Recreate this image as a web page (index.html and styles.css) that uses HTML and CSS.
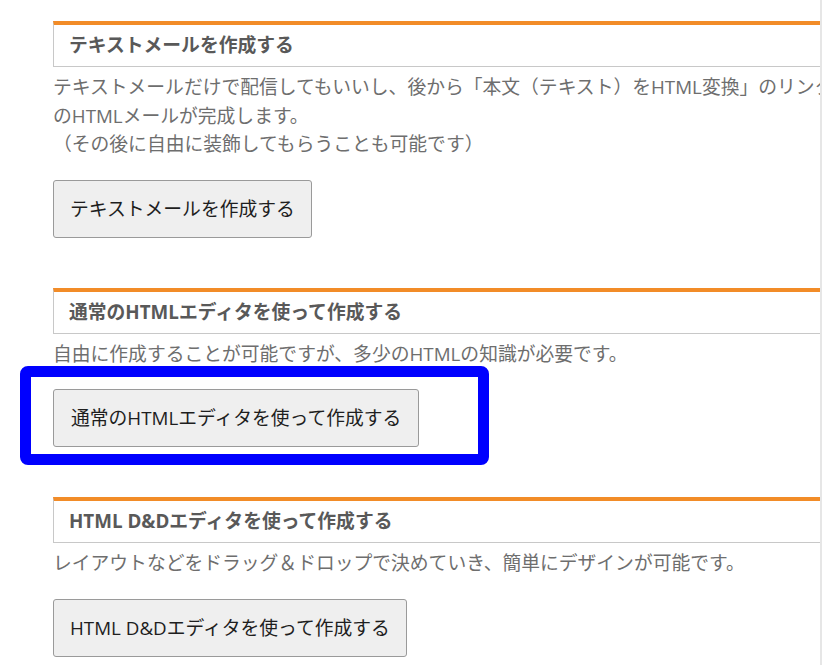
FILE: index.html
```html
<!DOCTYPE html>
<html lang="ja">
<head>
<meta charset="utf-8">
<link rel="stylesheet" href="styles.css">
</head>
<body>
<div class="page">
  <section class="block">
    <h3 class="block-title">テキストメールを作成する</h3>
    <p class="block-text">テキストメールだけで配信してもいいし、後から「本文（テキスト）をHTML変換」のリンクから変換すればそのままのHTMLメールが完成します。<br>（その後に自由に装飾してもらうことも可能です）</p>
    <div class="btn-row"><button class="btn">テキストメールを作成する</button></div>
  </section>
  <section class="block">
    <h3 class="block-title">通常のHTMLエディタを使って作成する</h3>
    <p class="block-text">自由に作成することが可能ですが、多少のHTMLの知識が必要です。</p>
    <div class="btn-row"><span class="btn-wrap"><button class="btn btn-wide">通常のHTMLエディタを使って作成する</button><span class="highlight"></span></span></div>
  </section>
  <section class="block">
    <h3 class="block-title">HTML D&amp;Dエディタを使って作成する</h3>
    <p class="block-text">レイアウトなどをドラッグ＆ドロップで決めていき、簡単にデザインが可能です。</p>
    <div class="btn-row"><button class="btn">HTML D&amp;Dエディタを使って作成する</button></div>
  </section>
</div>
<div class="edge-line"></div>
</body>
</html>
```
FILE: styles.css
```css
html, body {
  margin: 0;
  padding: 0;
  background: #fff;
  overflow: hidden;
}
body {
  font-family: "Open Sans", "Noto Sans CJK JP", sans-serif;
  width: 822px;
  height: 665px;
  position: relative;
}
.page {
  padding: 21px 0 0 53px;
  width: 1000px;
}
.block {
  margin-bottom: 50px;
}
.block-title {
  margin: 0;
  border-top: 4px solid #f28c28;
  border-left: 1px solid #c8c8c8;
  border-bottom: 1px solid #c8c8c8;
  padding: 6px 15px 7px;
  font-size: 18.8px;
  line-height: 28px;
  font-weight: 700;
  color: #595959;
}
.block-text {
  margin: 6px 0 0;
  font-size: 18.8px;
  line-height: 28.5px;
  color: #6e6e6e;
}
.btn-row {
  margin-top: 21px;
  display: flex;
}
.btn-wrap {
  position: relative;
  display: inline-flex;
}
.btn {
  font-family: "Open Sans", "Noto Sans CJK JP", sans-serif;
  font-size: 18.8px;
  line-height: 28px;
  color: #1e1e1e;
  background: #efefef;
  border: 1px solid #9a9a9a;
  border-radius: 3px;
  padding: 14px 16px;
  margin: 0;
}
.btn-wide {
  padding: 14px 17px;
}
.highlight {
  position: absolute;
  left: -33px;
  top: -23px;
  bottom: -18px;
  width: 469px;
  box-sizing: border-box;
  border: 11px solid #0000ff;
  border-radius: 8px;
  pointer-events: none;
}
.edge-line {
  position: absolute;
  left: 820px;
  top: 0;
  width: 2px;
  height: 665px;
  background: #e6e6e6;
}
```
